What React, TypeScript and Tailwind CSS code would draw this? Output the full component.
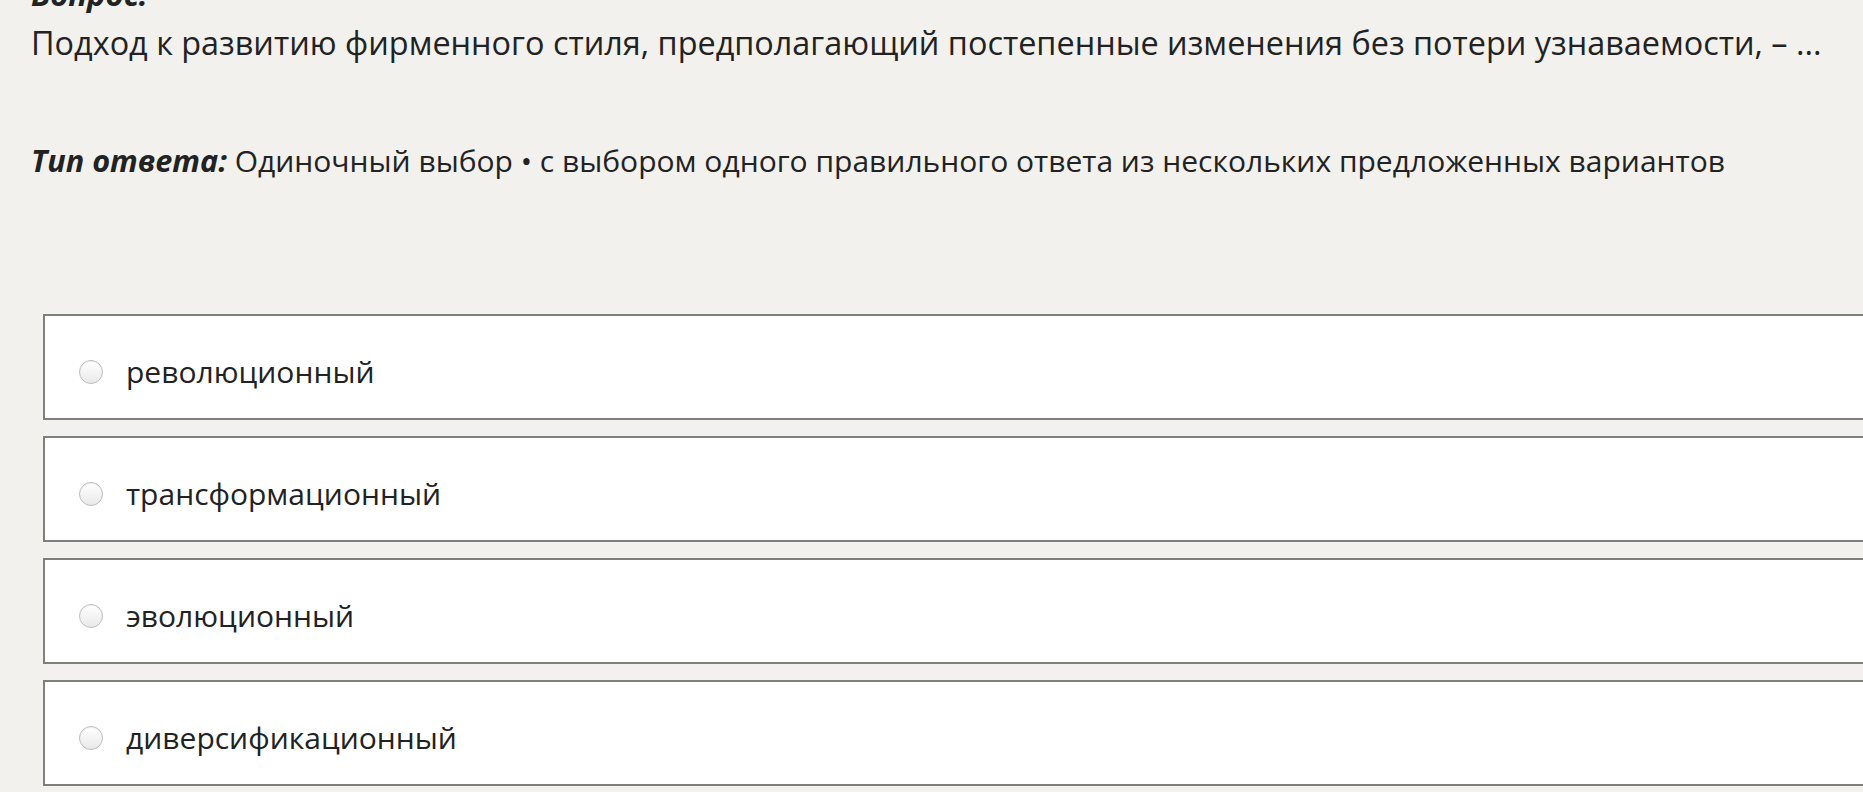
const options = ["революционный", "трансформационный", "эволюционный", "диверсификационный"];

function Radio() {
    return (
        <span className="block h-[24px] w-[24px] shrink-0 rounded-full border border-[#bdbdbd] bg-gradient-to-b from-[#ffffff] to-[#e9e9e9] shadow-[inset_0_1px_1px_rgba(0,0,0,0.06)]" />
    );
}

export default function App() {
    return (
        <div className="h-[792px] w-full overflow-hidden bg-[#f2f1ee] font-['Open_Sans','Noto_Sans',sans-serif] leading-[48px] text-[#222222]">
            <div className="mt-[-30px] pl-[31px]">
                <div className="text-[31px] font-bold italic">Вопрос:</div>
                <div className="text-[32.4px]">Подход к развитию фирменного стиля, предполагающий постепенные изменения без потери узнаваемости, – ...</div>
                <div className="mt-[70px] text-[30px]">
                    <span className="text-[30.6px] font-bold italic">Тип ответа:</span> Одиночный выбор • с выбором одного правильного ответа из нескольких предложенных вариантов
                </div>
            </div>
            <div className="mt-[129px] ml-[43px] flex w-[1900px] flex-col gap-[16px] text-[30px]">
                {options.map((option) => (
                    <div key={option} className="flex h-[106px] items-center gap-[23px] border-2 border-[#7f7f7f] bg-white pt-[9px] pl-[34px]">
                        <Radio />
                        <span>{option}</span>
                    </div>
                ))}
            </div>
        </div>
    );
}
